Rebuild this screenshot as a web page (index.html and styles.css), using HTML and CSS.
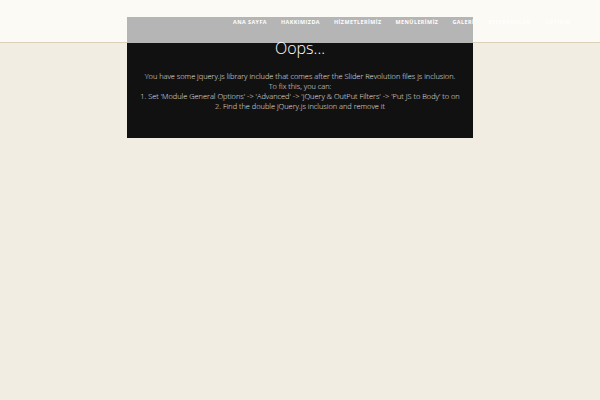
FILE: index.html
```html
<!DOCTYPE html>
<html>
  <head>
    <meta charset="UTF-8" />
    <title>Ana Sayfa</title>
    <link rel="stylesheet" href="styles.css">
  </head>
  <body>
    <div class="header">
      <ul class="menu">
        <li>ANA SAYFA</li>
        <li>HAKKIMIZDA</li>
        <li>HİZMETLERİMİZ</li>
        <li>MENÜLERİMİZ</li>
        <li>GALERİ</li>
        <li>REFERANSLAR</li>
        <li>İLETİŞİM</li>
      </ul>
    </div>
    <div class="content"></div>
    <div class="rev-error">
      <div class="rev-error-top"></div>
      <div class="rev-error-body">
        <h2>Oops...</h2>
        <p>You have some jquery.js library include that comes after the Slider Revolution files js inclusion.<br>
        To fix this, you can:<br>
        1. Set 'Module General Options' -&gt; 'Advanced' -&gt; 'jQuery &amp; OutPut Filters' -&gt; 'Put JS to Body' to on<br>
        2. Find the double jQuery.js inclusion and remove it</p>
      </div>
    </div>
  </body>
</html>
```

FILE: styles.css
```css
body {
  margin: 0;
  padding: 0;
  background-color: #f1ede2;
  font-family: "Open Sans", sans-serif;
  height: 400px;
  overflow: hidden;
}

.header {
  height: 43px;
  background-color: #fbfaf5;
  border-bottom: 1px solid #dccfb8;
  box-sizing: border-box;
}

.menu {
  list-style: none;
  margin: 0;
  padding: 18px 0 0 233px;
  display: flex;
  gap: 14px;
  position: relative;
  z-index: 2;
}

.menu li {
  font-size: 5.4px;
  font-weight: 700;
  letter-spacing: 0.45px;
  color: #fff;
  white-space: nowrap;
}

.rev-error {
  position: absolute;
  left: 127px;
  top: 17px;
  width: 346px;
  z-index: 1;
}

.rev-error-top {
  height: 26px;
  background-color: #b5b5b5;
}

.rev-error-body {
  height: 95px;
  background-color: #111;
  text-align: center;
  color: #e8e8e8;
}

.rev-error-body h2 {
  margin: 0;
  position: relative;
  top: -5px;
  font-size: 16px;
  font-weight: 300;
  color: #fff;
  line-height: 20px;
}

.rev-error-body p {
  margin: 8px 0 0 0;
  font-size: 7.4px;
  font-weight: 300;
  line-height: 10px;
}
```
